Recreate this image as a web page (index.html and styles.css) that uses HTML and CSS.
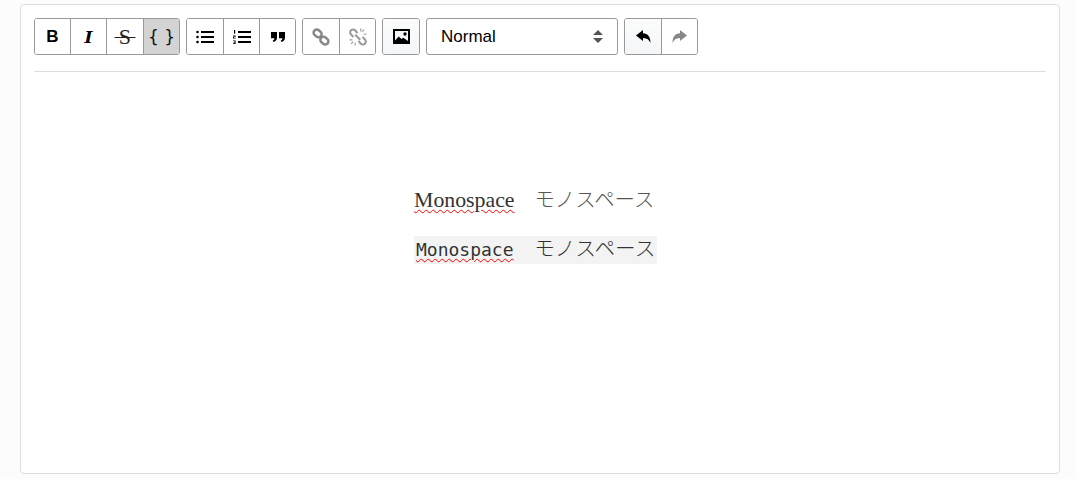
FILE: index.html
```html
<!DOCTYPE html>
<html lang="ja">
<head>
<meta charset="utf-8">
<title>Editor</title>
<link rel="stylesheet" href="styles.css">
</head>
<body>
<main class="frame">
  <div class="toolbar">
    <div class="group group-inline">
      <button class="btn btn-first glyph-b">B</button>
      <button class="btn glyph-i">I</button>
      <button class="btn btn-strike glyph-s">&#8201;S&#8201;</button>
      <button class="btn glyph-code active">{ }</button>
    </div>
    <div class="group">
      <button class="btn" aria-label="Bulleted list">
        <svg class="icon" viewBox="0 0 18 14"><circle cx="1.5" cy="2" r="1.3"/><circle cx="1.5" cy="7" r="1.3"/><circle cx="1.5" cy="12" r="1.3"/><rect x="5" y="1" width="13" height="2"/><rect x="5" y="6" width="13" height="2"/><rect x="5" y="11" width="13" height="2"/></svg>
      </button>
      <button class="btn" aria-label="Numbered list">
        <svg class="icon" viewBox="0 0 18 14"><rect x="1" y="0" width="1.2" height="3.6"/><path d="M0 5.6h2.6v1.4H1v.7h1.6v.9H0V7h1.6v-.5H0z"/><path d="M0 10.4h2.6V14H0v-.8h1.6v-.6H.6v-.6h1v-.7H0z"/><rect x="5" y="1" width="13" height="2"/><rect x="5" y="6" width="13" height="2"/><rect x="5" y="11" width="13" height="2"/></svg>
      </button>
      <button class="btn" aria-label="Blockquote">
        <svg class="icon icon-quote" viewBox="0 0 14 10"><path d="M0 0h6v5.500C6 8 4.500 9.600 2.400 10L1.700 8.600C2.900 8.200 3.400 7.400 3.400 6.200H0z"/><path d="M8 0h6v5.500c0 2.500-1.500 4.100-3.600 4.500L9.700 8.600c1.200-.4 1.700-1.200 1.700-2.400H8z"/></svg>
      </button>
    </div>
    <div class="group">
      <button class="btn" aria-label="Link">
        <svg class="icon icon-link" viewBox="0 0 16 16"><g class="link-stroke"><rect x="1.200" y="2" width="7.600" height="5.600" rx="2.800" transform="rotate(40 5 4.800)"/><rect x="7.200" y="8.400" width="7.600" height="5.600" rx="2.800" transform="rotate(40 11 11.200)"/></g></svg>
      </button>
      <button class="btn" aria-label="Unlink">
        <svg class="icon icon-link" viewBox="0 0 16 16"><g class="link-stroke thin"><path d="M7.500 4.500 5.500 2C4.500 1 2.800 1 1.800 2s-1 2.800 0 3.800L4 8"/><path d="M8.500 11.500l2 2.500c1 1 2.700 1 3.700 0s1-2.800 0-3.800L12 8"/><path d="M5.500 6 10 10.500"/><path class="rays" d="M10.500.5V3M13.500 1.500l-1.800 1.800M15.500 5.500H13M.5 10.500H3M2 14l1.800-1.800M5.500 15.500V13"/></g></svg>
      </button>
    </div>
    <div class="group">
      <button class="btn hover" aria-label="Image">
        <svg class="icon icon-image" viewBox="0 0 17 15"><path fill-rule="evenodd" d="M0 0h17v15H0zM2 2v9.500l3.800-4 2.700 2.600 1.800-1.400 4.700 3.300V2zM12 3.300a1.700 1.700 0 1 1 0 3.400 1.700 1.700 0 0 1 0-3.400z"/></svg>
      </button>
    </div>
    <div class="select">
      <span>Normal</span>
      <svg class="chevrons" viewBox="0 0 10 13"><path d="M5 0l5 5H0zM5 13 0 8h10z"/></svg>
    </div>
    <div class="group">
      <button class="btn hover" aria-label="Undo">
        <svg class="icon icon-arrow" viewBox="0 0 15 15"><path d="M7 1v3.200c5 .3 7.500 3.500 7.500 9.800-1.300-3.300-3.500-5-7.500-5.100V12L0 6.500z"/></svg>
      </button>
      <button class="btn muted" aria-label="Redo">
        <svg class="icon icon-arrow" viewBox="0 0 15 15"><path d="M8 1v3.200C3 4.500.5 7.700.5 14c1.300-3.300 3.500-5 7.500-5.100V12l7-5.500z"/></svg>
      </button>
    </div>
  </div>
  <div class="content">
    <p class="line-serif"><span class="spell latin">Monospace</span><span class="gap">　</span><span class="kana-serif">モノスペース</span></p>
    <p class="line-mono"><code><span class="spell">Monospace</span><span class="kana-mono">　モノスペース</span></code></p>
  </div>
</main>
</body>
</html>
```
FILE: styles.css
```css
* { box-sizing: border-box; }
html, body { height: 100%; }
body {
  margin: 0;
  padding: 4px 16px 5px 20px;
  background: #fcfcfc;
  font-family: "Liberation Sans", Arial, sans-serif;
}
.frame {
  height: 100%;
  background: #fff;
  border: 1px solid #ddd;
  border-radius: 4px;
  padding: 13px 13px 0;
}
.toolbar {
  display: flex;
  gap: 6px;
  height: 54px;
  padding-bottom: 17px;
  border-bottom: 1px solid #ddd;
}
.group {
  display: flex;
  height: 37px;
  border: 1px solid #999;
  border-radius: 3px;
  overflow: hidden;
}
.btn {
  display: flex;
  align-items: center;
  justify-content: center;
  width: 36px;
  height: 35px;
  margin: 0;
  padding: 0;
  border: 0;
  border-left: 1px solid #999;
  background: #fff;
  color: #000;
}
.btn:first-child { border-left: 0; }
.btn-first { width: 35px; }
.btn-strike { width: 37px; }
.hover { background: linear-gradient(#fbfcfc, #f4f6f8); }
.active { background: #d3d3d3; }
.muted { color: #888; }
.glyph-b { font: bold 17px "Liberation Sans", sans-serif; }
.glyph-i { font: italic bold 17px "DejaVu Serif", serif; }
.glyph-s { font: 22px "Liberation Serif", serif; color: #222; text-decoration: line-through; text-decoration-thickness: 1px; white-space: pre; }
.glyph-code { font: 17px "DejaVu Sans", sans-serif; color: #111; }
.icon { width: 18px; height: 14px; fill: currentColor; }
.icon-quote { width: 14px; height: 10px; }
.icon-link { width: 18px; height: 18px; }
.link-stroke { fill: none; stroke: #888; stroke-width: 2.200; }
.link-stroke.thin { stroke: #999; stroke-width: 1.800; }
.rays { stroke-width: 1; }
.icon-image { width: 17px; height: 15px; }
.icon-arrow { width: 15px; height: 15px; }
.select {
  display: flex;
  align-items: center;
  justify-content: space-between;
  width: 192px;
  height: 37px;
  padding: 0 14px;
  border: 1px solid #999;
  border-radius: 3px;
  font-size: 17px;
  color: #000;
}
.chevrons { width: 10px; height: 13px; fill: #555; }
.content {
  padding: 112px 0 0 380px;
}
.line-serif, .line-mono {
  margin: 0;
  color: #333;
  white-space: nowrap;
}
.line-serif {
  height: 30px;
  font: 20px/28px "Liberation Serif", "Noto Sans CJK JP", serif;
}
.latin { font-size: 21.800px; }
.kana-serif { font-family: "Noto Sans CJK JP", serif; font-weight: 300; font-size: 20.400px; color: #555; }
.line-mono { margin-top: 22px; }
.line-mono code {
  display: inline-block;
  height: 28px;
  padding: 0 2px;
  background: #f3f3f3;
  font: 18px/26px "DejaVu Sans Mono", "Noto Sans CJK JP", monospace;
}
.kana-mono { font-size: 20.600px; font-weight: 300; }
.spell {
  text-decoration: underline wavy #f00 1px;
  text-underline-offset: 2px;
}
```
